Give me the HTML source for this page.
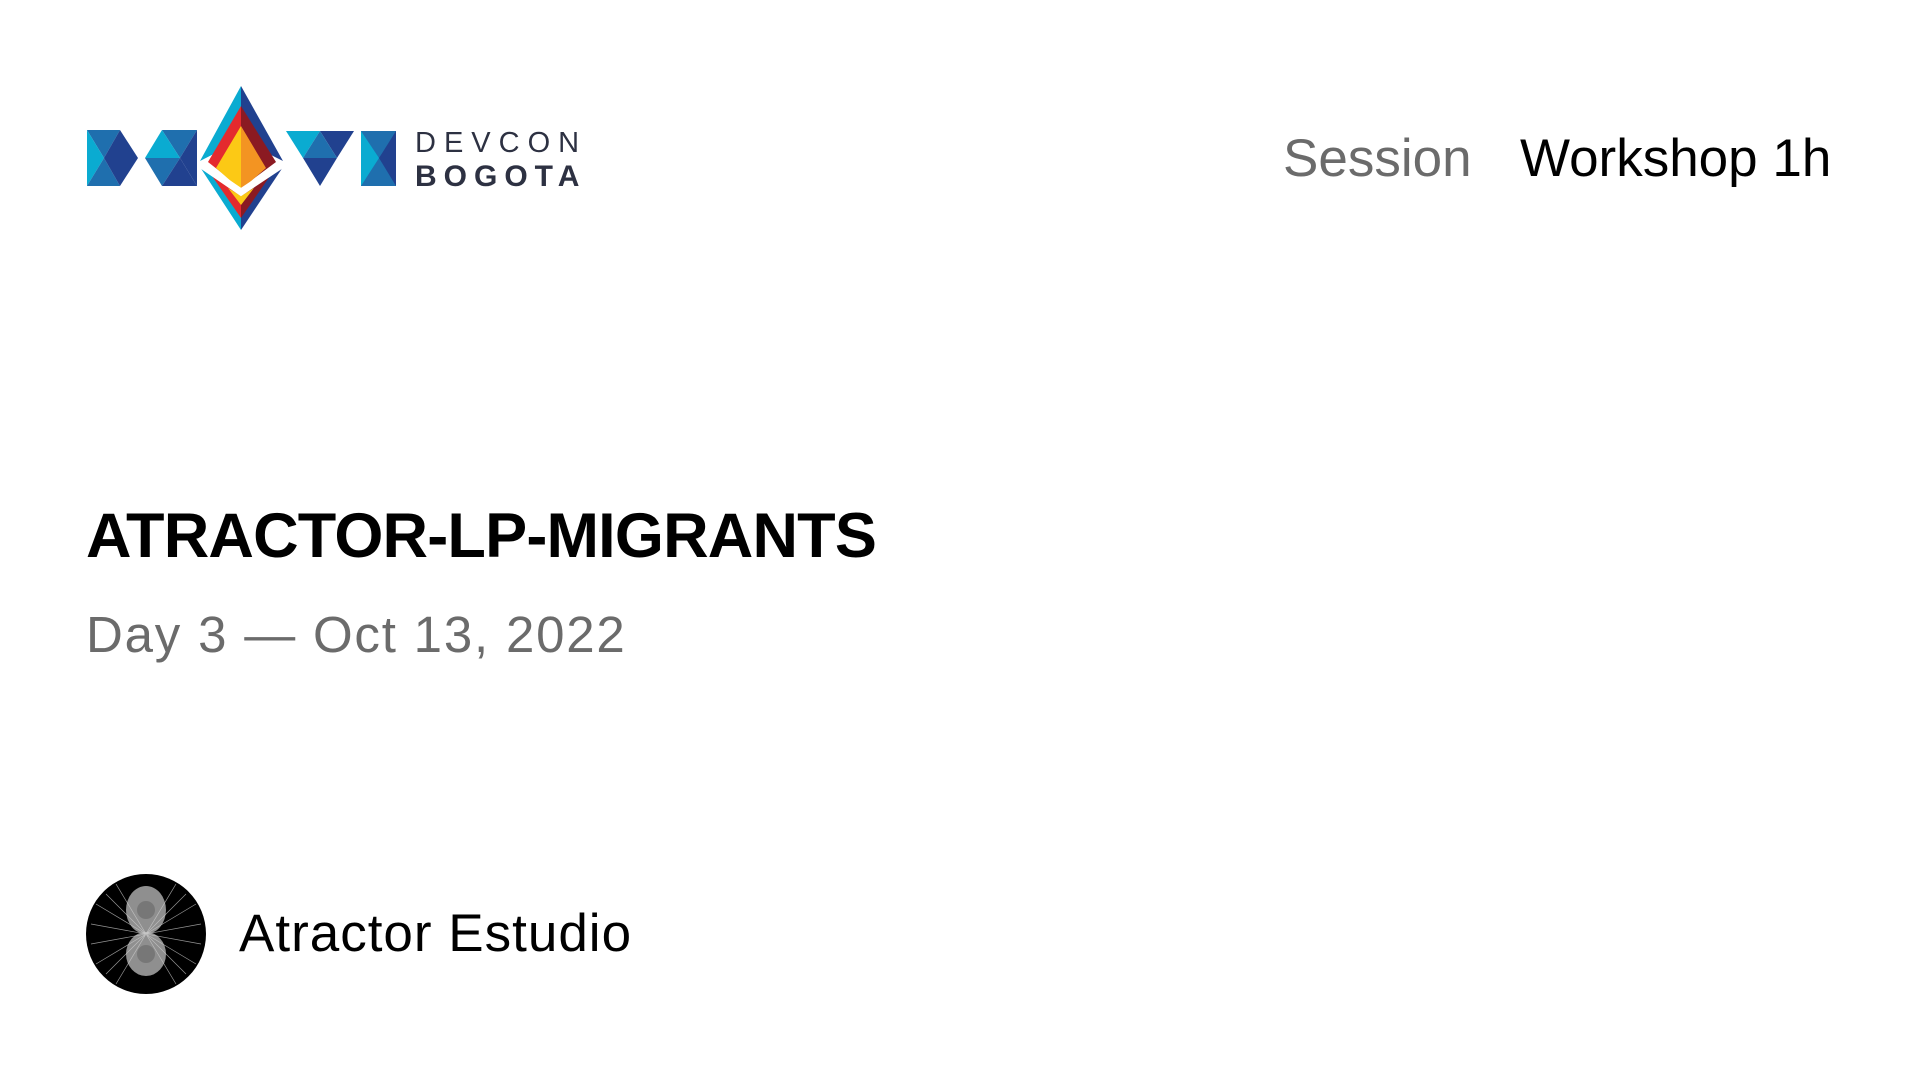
<!DOCTYPE html>
<html><head><meta charset="utf-8"><style>
html,body{margin:0;padding:0;background:#fff;width:1920px;height:1080px;overflow:hidden;font-family:"Liberation Sans",sans-serif;}
.abs{position:absolute;white-space:nowrap;}
</style></head><body>
<svg class="abs" style="left:0;top:0" width="620" height="250" viewBox="0 0 620 250">
  <polygon points="87,130 120,130 104,158" fill="#1f6fae"/>
  <polygon points="87,130 104,158 87,186" fill="#0aabd1"/>
  <polygon points="87,186 104,158 120,186" fill="#1f6fae"/>
  <polygon points="120,130 138,158 120,186 104,158" fill="#21418f"/>
  <polygon points="162,130 197,130 180,158" fill="#1f6fae"/>
  <polygon points="162,130 180,158 145,158" fill="#0aabd1"/>
  <polygon points="145,158 180,158 162,186" fill="#1f6fae"/>
  <polygon points="162,186 180,158 197,186" fill="#21418f"/>
  <polygon points="197,130 197,186 180,158" fill="#21418f"/>
  <polygon points="241,86 200,161 241,140" fill="#0aabd1"/>
  <polygon points="241,86 283,161 241,140" fill="#21418f"/>
  <polygon points="241,106 208,162 241,188" fill="#e42a2e"/>
  <polygon points="241,106 276,162 241,188" fill="#8b1a22"/>
  <polygon points="241,126 216,168 241,190" fill="#fcc915"/>
  <polygon points="241,126 266,168 241,190" fill="#f39422"/>
  <polygon points="200,167 241,230 241,198" fill="#0aabd1"/>
  <polygon points="283,167 241,230 241,198" fill="#21418f"/>
  <polygon points="212,176 241,218 241,196" fill="#e42a2e"/>
  <polygon points="270,176 241,218 241,196" fill="#8b1a22"/>
  <polygon points="228,188 241,205 254,188 241,196" fill="#fcc915"/>
  <polyline points="200,164 241,192 283,164" fill="none" stroke="#fff" stroke-width="7"/>
  <polygon points="286,131 320,131 303,158" fill="#0aabd1"/>
  <polygon points="320,131 354,131 337,158" fill="#21418f"/>
  <polygon points="303,158 320,131 337,158" fill="#1f6fae"/>
  <polygon points="303,158 337,158 320,186" fill="#21418f"/>
  <rect x="361" y="131" width="35" height="55" fill="#1f6fae"/>
  <polygon points="361,131 379,158 361,186" fill="#0aabd1"/>
  <polygon points="396,131 379,158 396,186" fill="#21418f"/>
  <text x="415" y="152" font-family="Liberation Sans,sans-serif" font-size="29" letter-spacing="8" fill="#2d3142">DEVCON</text>
  <text x="415" y="186" font-family="Liberation Sans,sans-serif" font-size="30" font-weight="bold" letter-spacing="7" fill="#2d3142">BOGOTA</text>
</svg>
<div class="abs" style="left:1283px;top:128px;font-size:53px;color:#6b6b6b;">Session</div>
<div class="abs" style="left:1520px;top:128px;font-size:53px;color:#000;">Workshop 1h</div>
<div class="abs" style="left:86px;top:500px;font-size:63px;font-weight:bold;color:#000;letter-spacing:-0.8px;">ATRACTOR-LP-MIGRANTS</div>
<div class="abs" style="left:86px;top:605px;font-size:51px;color:#6b6b6b;letter-spacing:1.8px;">Day 3 — Oct 13, 2022</div>
<svg class="abs" style="left:86px;top:874px" width="120" height="120" viewBox="0 0 120 120">
  <circle cx="60" cy="60" r="60" fill="#000"/>
  <g stroke="#bbb" stroke-width="0.7" fill="none" opacity="0.8">
    <path d="M10 30 L110 90 M10 90 L110 30 M20 20 L100 100 M20 100 L100 20 M30 10 L90 110 M30 110 L90 10 M5 50 L115 70 M5 70 L115 50"/>
  </g>
  <ellipse cx="60" cy="36" rx="20" ry="24" fill="#ccc" opacity="0.7"/>
  <ellipse cx="60" cy="80" rx="20" ry="22" fill="#ccc" opacity="0.7"/>
  <circle cx="60" cy="36" r="9" fill="#777"/>
  <circle cx="60" cy="80" r="9" fill="#777"/>
</svg>
<div class="abs" style="left:239px;top:903px;font-size:53px;color:#000;letter-spacing:1px;">Atractor Estudio</div>
</body></html>
